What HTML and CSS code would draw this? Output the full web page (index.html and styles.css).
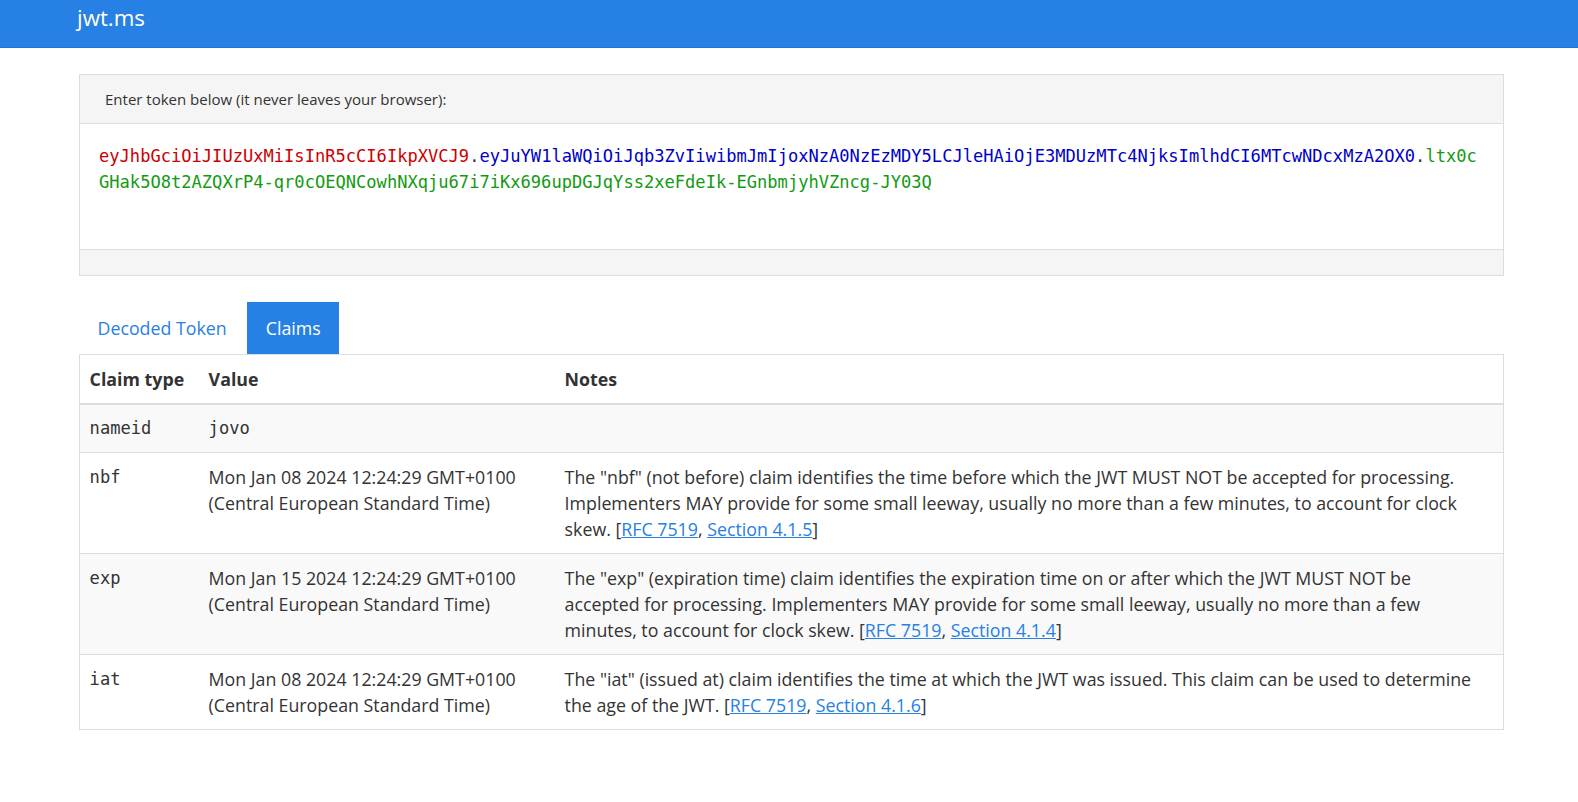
FILE: index.html
```html
<!DOCTYPE html>
<html lang="en">
<head>
<meta charset="utf-8">
<title>jwt.ms</title>
<link rel="stylesheet" href="styles.css">
</head>
<body>
<nav class="navbar">
  <a class="brand" href="#">jwt.ms</a>
</nav>
<main class="container">
  <section class="panel">
    <div class="panel-heading">Enter token below (it never leaves your browser):</div>
    <div class="panel-body">
      <div class="token"><span class="jwt-header">eyJhbGciOiJIUzUxMiIsInR5cCI6IkpXVCJ9</span><span class="jwt-dot">.</span><span class="jwt-payload">eyJuYW1laWQiOiJqb3ZvIiwibmJmIjoxNzA0NzEzMDY5LCJleHAiOjE3MDUzMTc4NjksImlhdCI6MTcwNDcxMzA2OX0</span><span class="jwt-dot">.</span><span class="jwt-signature">ltx0cGHak5O8t2AZQXrP4-qr0cOEQNCowhNXqju67i7iKx696upDGJqYss2xeFdeIk-EGnbmjyhVZncg-JY03Q</span></div>
    </div>
    <div class="panel-footer"></div>
  </section>

  <ul class="tabs">
    <li class="tab"><a href="#">Decoded Token</a></li>
    <li class="tab active"><a href="#">Claims</a></li>
  </ul>

  <table class="claims">
    <colgroup>
      <col class="col-type">
      <col class="col-value">
      <col class="col-notes">
    </colgroup>
    <thead>
      <tr><th>Claim type</th><th>Value</th><th class="notes">Notes</th></tr>
    </thead>
    <tbody>
      <tr>
        <td class="mono">nameid</td>
        <td class="mono">jovo</td>
        <td class="notes"></td>
      </tr>
      <tr>
        <td class="mono">nbf</td>
        <td>Mon Jan 08 2024 12:24:29 GMT+0100 (Central European Standard Time)</td>
        <td class="notes">The "nbf" (not before) claim identifies the time before which the JWT MUST NOT be accepted for processing. Implementers MAY provide for some small leeway, usually no more than a few minutes, to account for clock skew. [<a href="#">RFC 7519</a>, <a href="#">Section 4.1.5</a>]</td>
      </tr>
      <tr>
        <td class="mono">exp</td>
        <td>Mon Jan 15 2024 12:24:29 GMT+0100 (Central European Standard Time)</td>
        <td class="notes">The "exp" (expiration time) claim identifies the expiration time on or after which the JWT MUST NOT be accepted for processing. Implementers MAY provide for some small leeway, usually no more than a few minutes, to account for clock skew. [<a href="#">RFC 7519</a>, <a href="#">Section 4.1.4</a>]</td>
      </tr>
      <tr>
        <td class="mono">iat</td>
        <td>Mon Jan 08 2024 12:24:29 GMT+0100 (Central European Standard Time)</td>
        <td class="notes">The "iat" (issued at) claim identifies the time at which the JWT was issued. This claim can be used to determine the age of the JWT. [<a href="#">RFC 7519</a>, <a href="#">Section 4.1.6</a>]</td>
      </tr>
    </tbody>
  </table>
</main>
</body>
</html>
```
FILE: styles.css
```css
* { box-sizing: border-box; }

html, body {
  margin: 0;
  padding: 0;
  background: #ffffff;
}

body {
  font-family: "Open Sans", "Noto Sans", sans-serif;
  font-size: 17.8px;
  line-height: 26.2px;
  color: #333333;
}

a { color: #2780e3; }

/* Navbar */
.navbar {
  height: 48px;
  background: #2780e3;
  border-bottom: 1px solid #1f74d4;
  padding-left: 77px;
}

.brand {
  display: inline-block;
  padding-top: 3px;
  font-size: 22.3px;
  line-height: 30px;
  color: #ffffff;
  text-decoration: none;
}

/* Container */
.container {
  width: 1425px;
  margin-left: 79px;
  padding-top: 26px;
}

/* Token panel */
.panel {
  border: 1px solid #dddddd;
}

.panel-heading {
  height: 49px;
  padding: 0 25px;
  background: #f5f5f5;
  border-bottom: 1px solid #dddddd;
  font-size: 15px;
  line-height: 48px;
  color: #333333;
}

.panel-body {
  height: 126px;
  padding: 19px 20px 0 19px;
  border-bottom: 1px solid #dddddd;
  background: #ffffff;
}

.token {
  font-family: "DejaVu Sans Mono", "Liberation Mono", monospace;
  font-size: 17.09px;
  line-height: 26px;
  word-break: break-all;
}

.jwt-header { color: #cc0000; }
.jwt-payload { color: #0000c8; }
.jwt-signature { color: #139a13; }
.jwt-dot { color: #333333; }

.panel-footer {
  height: 25px;
  background: #f5f5f5;
}

/* Tabs */
.tabs {
  display: flex;
  list-style: none;
  margin: 26px 0 0 0;
  padding: 0;
}

.tab {
  margin-right: 2px;
}

.tab a {
  display: block;
  padding: 12px 17.5px;
  border: 1px solid transparent;
  text-decoration: none;
  color: #2780e3;
}

.tab.active a {
  background: #2780e3;
  border-color: #2780e3;
  color: #ffffff;
}

/* Claims table */
.claims {
  width: 100%;
  table-layout: fixed;
  border-collapse: separate;
  border-spacing: 0;
  border: 1px solid #dddddd;
}

.col-type { width: 119px; }
.col-value { width: 356px; }

.claims th,
.claims td {
  padding: 10.7px 9.6px;
  text-align: left;
  vertical-align: top;
}

.claims th.notes,
.claims td.notes {
  padding-right: 17px;
}

.claims th {
  font-weight: 700;
  white-space: nowrap;
  border-bottom: 2px solid #dddddd;
}

.claims tbody tr + tr td {
  border-top: 1px solid #dddddd;
}

.claims tbody tr:nth-child(odd) td {
  background: #f9f9f9;
}

.claims td.mono {
  font-family: "DejaVu Sans Mono", "Liberation Mono", monospace;
  font-size: 17.09px;
}
```
